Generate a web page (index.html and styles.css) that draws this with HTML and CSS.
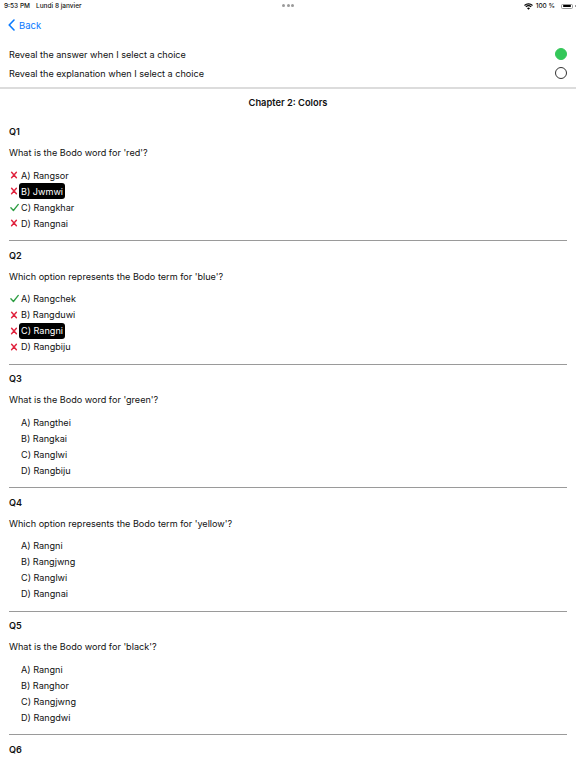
FILE: index.html
```html
<!DOCTYPE html>
<html lang="en">
<head>
<meta charset="utf-8">
<title>Chapter 2: Colors</title>
<link rel="stylesheet" href="styles.css">
</head>
<body>
<div class="status">
  <div class="status-left"><span>9:53 PM</span><span class="date">Lundi 8 janvier</span></div>
  <div class="dots"><i></i><i></i><i></i></div>
  <div class="status-right">
    <svg class="wifi" width="9" height="7" viewBox="0 0 18 14"><path d="M9 13.5 L6 10.3 A4.4 4.4 0 0 1 12 10.3 Z" fill="#000"/><path d="M3.6 7.8 A7.8 7.8 0 0 1 14.4 7.8" stroke="#000" stroke-width="2.2" fill="none"/><path d="M1 5 A11.6 11.6 0 0 1 17 5" stroke="#000" stroke-width="2.2" fill="none"/></svg>
    <span>100 %</span>
    <span class="battery"><span class="bat-fill"></span></span><span class="bat-tip"></span>
  </div>
</div>
<div class="nav">
  <a class="back"><svg width="7" height="12" viewBox="0 0 7 12"><path d="M6 1 L1.2 6 L6 11" stroke="#0a7aff" stroke-width="1.6" fill="none" stroke-linecap="round" stroke-linejoin="round"/></svg><span>Back</span></a>
</div>
<div class="settings">
  <div class="setting"><span>Reveal the answer when I select a choice</span><span class="radio on"></span></div>
  <div class="setting"><span>Reveal the explanation when I select a choice</span><span class="radio"></span></div>
</div>
<div class="header-rule"></div>
<h1 class="chapter">Chapter 2: Colors</h1>

<div class="question">
  <div class="qlabel">Q1</div>
  <div class="qtext">What is the Bodo word for 'red'?</div>
  <ul class="options">
    <li><span class="mark x"><svg viewBox="0 0 10 10"><path d="M2 1.5 L8 8.5 M8 1.5 L2 8.5"/></svg></span><span class="opt">A) Rangsor</span></li>
    <li><span class="mark x"><svg viewBox="0 0 10 10"><path d="M2 1.5 L8 8.5 M8 1.5 L2 8.5"/></svg></span><span class="opt sel">B) Jwmwi</span></li>
    <li><span class="mark ok"><svg viewBox="0 0 10 10"><path d="M1 5.2 L3.8 8.3 L9.2 1.6"/></svg></span><span class="opt">C) Rangkhar</span></li>
    <li><span class="mark x"><svg viewBox="0 0 10 10"><path d="M2 1.5 L8 8.5 M8 1.5 L2 8.5"/></svg></span><span class="opt">D) Rangnai</span></li>
  </ul>
</div>
<div class="rule"></div>

<div class="question">
  <div class="qlabel">Q2</div>
  <div class="qtext">Which option represents the Bodo term for 'blue'?</div>
  <ul class="options">
    <li><span class="mark ok"><svg viewBox="0 0 10 10"><path d="M1 5.2 L3.8 8.3 L9.2 1.6"/></svg></span><span class="opt">A) Rangchek</span></li>
    <li><span class="mark x"><svg viewBox="0 0 10 10"><path d="M2 1.5 L8 8.5 M8 1.5 L2 8.5"/></svg></span><span class="opt">B) Rangduwi</span></li>
    <li><span class="mark x"><svg viewBox="0 0 10 10"><path d="M2 1.5 L8 8.5 M8 1.5 L2 8.5"/></svg></span><span class="opt sel">C) Rangni</span></li>
    <li><span class="mark x"><svg viewBox="0 0 10 10"><path d="M2 1.5 L8 8.5 M8 1.5 L2 8.5"/></svg></span><span class="opt">D) Rangbiju</span></li>
  </ul>
</div>
<div class="rule"></div>

<div class="question">
  <div class="qlabel">Q3</div>
  <div class="qtext">What is the Bodo word for 'green'?</div>
  <ul class="options">
    <li><span class="mark"></span><span class="opt">A) Rangthei</span></li>
    <li><span class="mark"></span><span class="opt">B) Rangkai</span></li>
    <li><span class="mark"></span><span class="opt">C) Ranglwi</span></li>
    <li><span class="mark"></span><span class="opt">D) Rangbiju</span></li>
  </ul>
</div>
<div class="rule"></div>

<div class="question">
  <div class="qlabel">Q4</div>
  <div class="qtext">Which option represents the Bodo term for 'yellow'?</div>
  <ul class="options">
    <li><span class="mark"></span><span class="opt">A) Rangni</span></li>
    <li><span class="mark"></span><span class="opt">B) Rangjwng</span></li>
    <li><span class="mark"></span><span class="opt">C) Ranglwi</span></li>
    <li><span class="mark"></span><span class="opt">D) Rangnai</span></li>
  </ul>
</div>
<div class="rule"></div>

<div class="question">
  <div class="qlabel">Q5</div>
  <div class="qtext">What is the Bodo word for 'black'?</div>
  <ul class="options">
    <li><span class="mark"></span><span class="opt">A) Rangni</span></li>
    <li><span class="mark"></span><span class="opt">B) Ranghor</span></li>
    <li><span class="mark"></span><span class="opt">C) Rangjwng</span></li>
    <li><span class="mark"></span><span class="opt">D) Rangdwi</span></li>
  </ul>
</div>
<div class="rule"></div>

<div class="question">
  <div class="qlabel">Q6</div>
</div>
</body>
</html>
```
FILE: styles.css
```css
html, body {
  margin: 0;
  padding: 0;
  background: #fff;
  overflow: hidden;
}
body {
  width: 576px;
  height: 768px;
  font-family: Inter, "Noto Sans", "Liberation Sans", sans-serif;
  color: #111;
  font-size: 9.1px;
}
.status {
  height: 12px;
  display: flex;
  align-items: center;
  justify-content: space-between;
  font-size: 6.5px;
  font-weight: 500;
  padding: 0 0 0 4px;
  position: relative;
}
.status-left { display: flex; gap: 6px; }
.dots {
  position: absolute;
  left: 282px;
  top: 4px;
  display: flex;
  gap: 1.5px;
}
.dots i {
  width: 3px;
  height: 3px;
  border-radius: 50%;
  background: #9a9a9a;
  display: block;
}
.status-right {
  display: flex;
  align-items: center;
  gap: 2px;
  font-weight: 500;
}
.wifi { margin-right: 1px; }
.battery {
  width: 12px;
  height: 5px;
  border: 0.6px solid #999;
  border-radius: 1.5px;
  padding: 0.6px;
  box-sizing: border-box;
  margin-left: 4px;
  display: flex;
}
.bat-fill { flex: 1; background: #000; border-radius: 0.8px; }
.bat-tip { width: 1px; height: 2px; background: #999; }
.nav {
  height: 26px;
  display: flex;
  align-items: center;
  padding-left: 8px;
}
.back {
  display: flex;
  align-items: center;
  gap: 4px;
  color: #0a7aff;
  font-size: 9.5px;
}
.settings {
  padding: 6.5px 9px 4.5px 9px;
}
.setting {
  height: 19px;
  display: flex;
  align-items: center;
  justify-content: space-between;
}
.radio {
  width: 12px;
  height: 12px;
  border-radius: 50%;
  border: 1px solid #333;
  box-sizing: border-box;
}
.radio.on {
  background: #34c759;
  border-color: #34c759;
}
.header-rule {
  height: 2px;
  background: #dcdcdc;
}
.chapter {
  margin: 7px 0 7.5px 0;
  text-align: center;
  font-size: 9.3px;
  font-weight: 600;
  line-height: 14px;
}
.question {
  padding: 7.5px 9px 0 9px;
}
.qlabel {
  font-weight: 600;
  line-height: 14px;
}
.qtext {
  margin-top: 7px;
  line-height: 14px;
}
.options {
  list-style: none;
  margin: 7px 0 9px 0;
  padding: 0;
}
.options li {
  height: 16px;
  display: flex;
  align-items: center;
}
.mark {
  width: 10px;
  height: 10px;
  display: flex;
  align-items: center;
  justify-content: center;
}
.mark svg {
  width: 9px;
  height: 9px;
  fill: none;
  stroke-linecap: round;
  stroke-linejoin: round;
}
.mark.x svg { stroke: #e0243f; stroke-width: 1.8; width: 8px; height: 8px; }
.mark.ok svg { stroke: #2f9e44; stroke-width: 1.5; }
.opt {
  padding: 1.5px 2px;
  border-radius: 3px;
  line-height: 13px;
}
.opt.sel {
  background: #000;
  color: #fff;
}
.rule {
  height: 1px;
  margin: 0 9px;
  background: #9a9a9a;
}
```
